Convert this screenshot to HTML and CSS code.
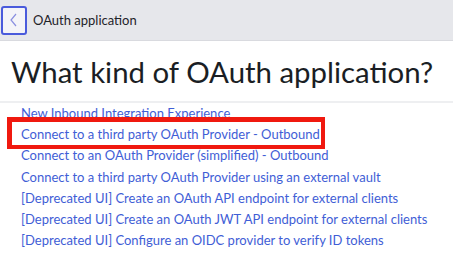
FILE: index.html
```html
<!DOCTYPE html>
<html>
<head>
<meta charset="utf-8">
<link rel="stylesheet" href="styles.css">
</head>
<body>
<header class="topbar">
  <button class="back" aria-label="Back">
    <svg width="10" height="14" viewBox="0 0 10 14"><path d="M7 1 L2 7 L7 13" fill="none" stroke="#8a8fe0" stroke-width="1.2"/></svg>
  </button>
  <span class="title">OAuth application</span>
</header>
<main class="content">
  <h1 class="heading">What kind of OAuth application?</h1>
  <ul class="links">
    <li><a href="#">New Inbound Integration Experience</a></li>
    <li class="highlight"><a href="#">Connect to a third party OAuth Provider - Outbound</a></li>
    <li><a href="#">Connect to an OAuth Provider (simplified) - Outbound</a></li>
    <li><a href="#">Connect to a third party OAuth Provider using an external vault</a></li>
    <li><a href="#">[Deprecated UI] Create an OAuth API endpoint for external clients</a></li>
    <li><a href="#">[Deprecated UI] Create an OAuth JWT API endpoint for external clients</a></li>
    <li><a href="#">[Deprecated UI] Configure an OIDC provider to verify ID tokens</a></li>
  </ul>
</main>
</body>
</html>
```
FILE: styles.css
```css
* , *::before, *::after { box-sizing: border-box; }
html, body { margin: 0; padding: 0; background: #ffffff; }
body { font-family: Lato, "Noto Sans", sans-serif; color: #1f2329; }
.topbar {
  height: 41px;
  background: #e6e7eb;
  border-bottom: 1px solid #d9dadf;
  display: flex;
  align-items: center;
  padding-left: 1px;
  gap: 6px;
}
.back {
  width: 26px;
  height: 29px;
  border: 2px solid #4a5bdc;
  border-radius: 3px;
  background: #f4f4f8;
  display: flex;
  align-items: center;
  justify-content: center;
  padding: 0;
}
.title { font-size: 13px; color: #1f2329; }
.heading {
  margin: 0;
  padding: 16px 0 14px 11px;
  font-size: 29.4px;
  font-weight: 400;
  line-height: 30px;
  color: #1a1e24;
  border-bottom: 2px solid #eeeff1;
}
.links {
  list-style: none;
  margin: 0;
  padding: 0 0 0 21px;
}
.links li { font-size: 13px; line-height: 21.2px; position: relative; }
.links a { color: #3f5ed6; text-decoration: none; }
.highlight::before {
  content: "";
  position: absolute;
  left: -14px;
  top: -7px;
  width: 318px;
  height: 32px;
  border: 4px solid #f0190f;
  border-top-width: 5px;
  border-left-width: 5px;
}
```
